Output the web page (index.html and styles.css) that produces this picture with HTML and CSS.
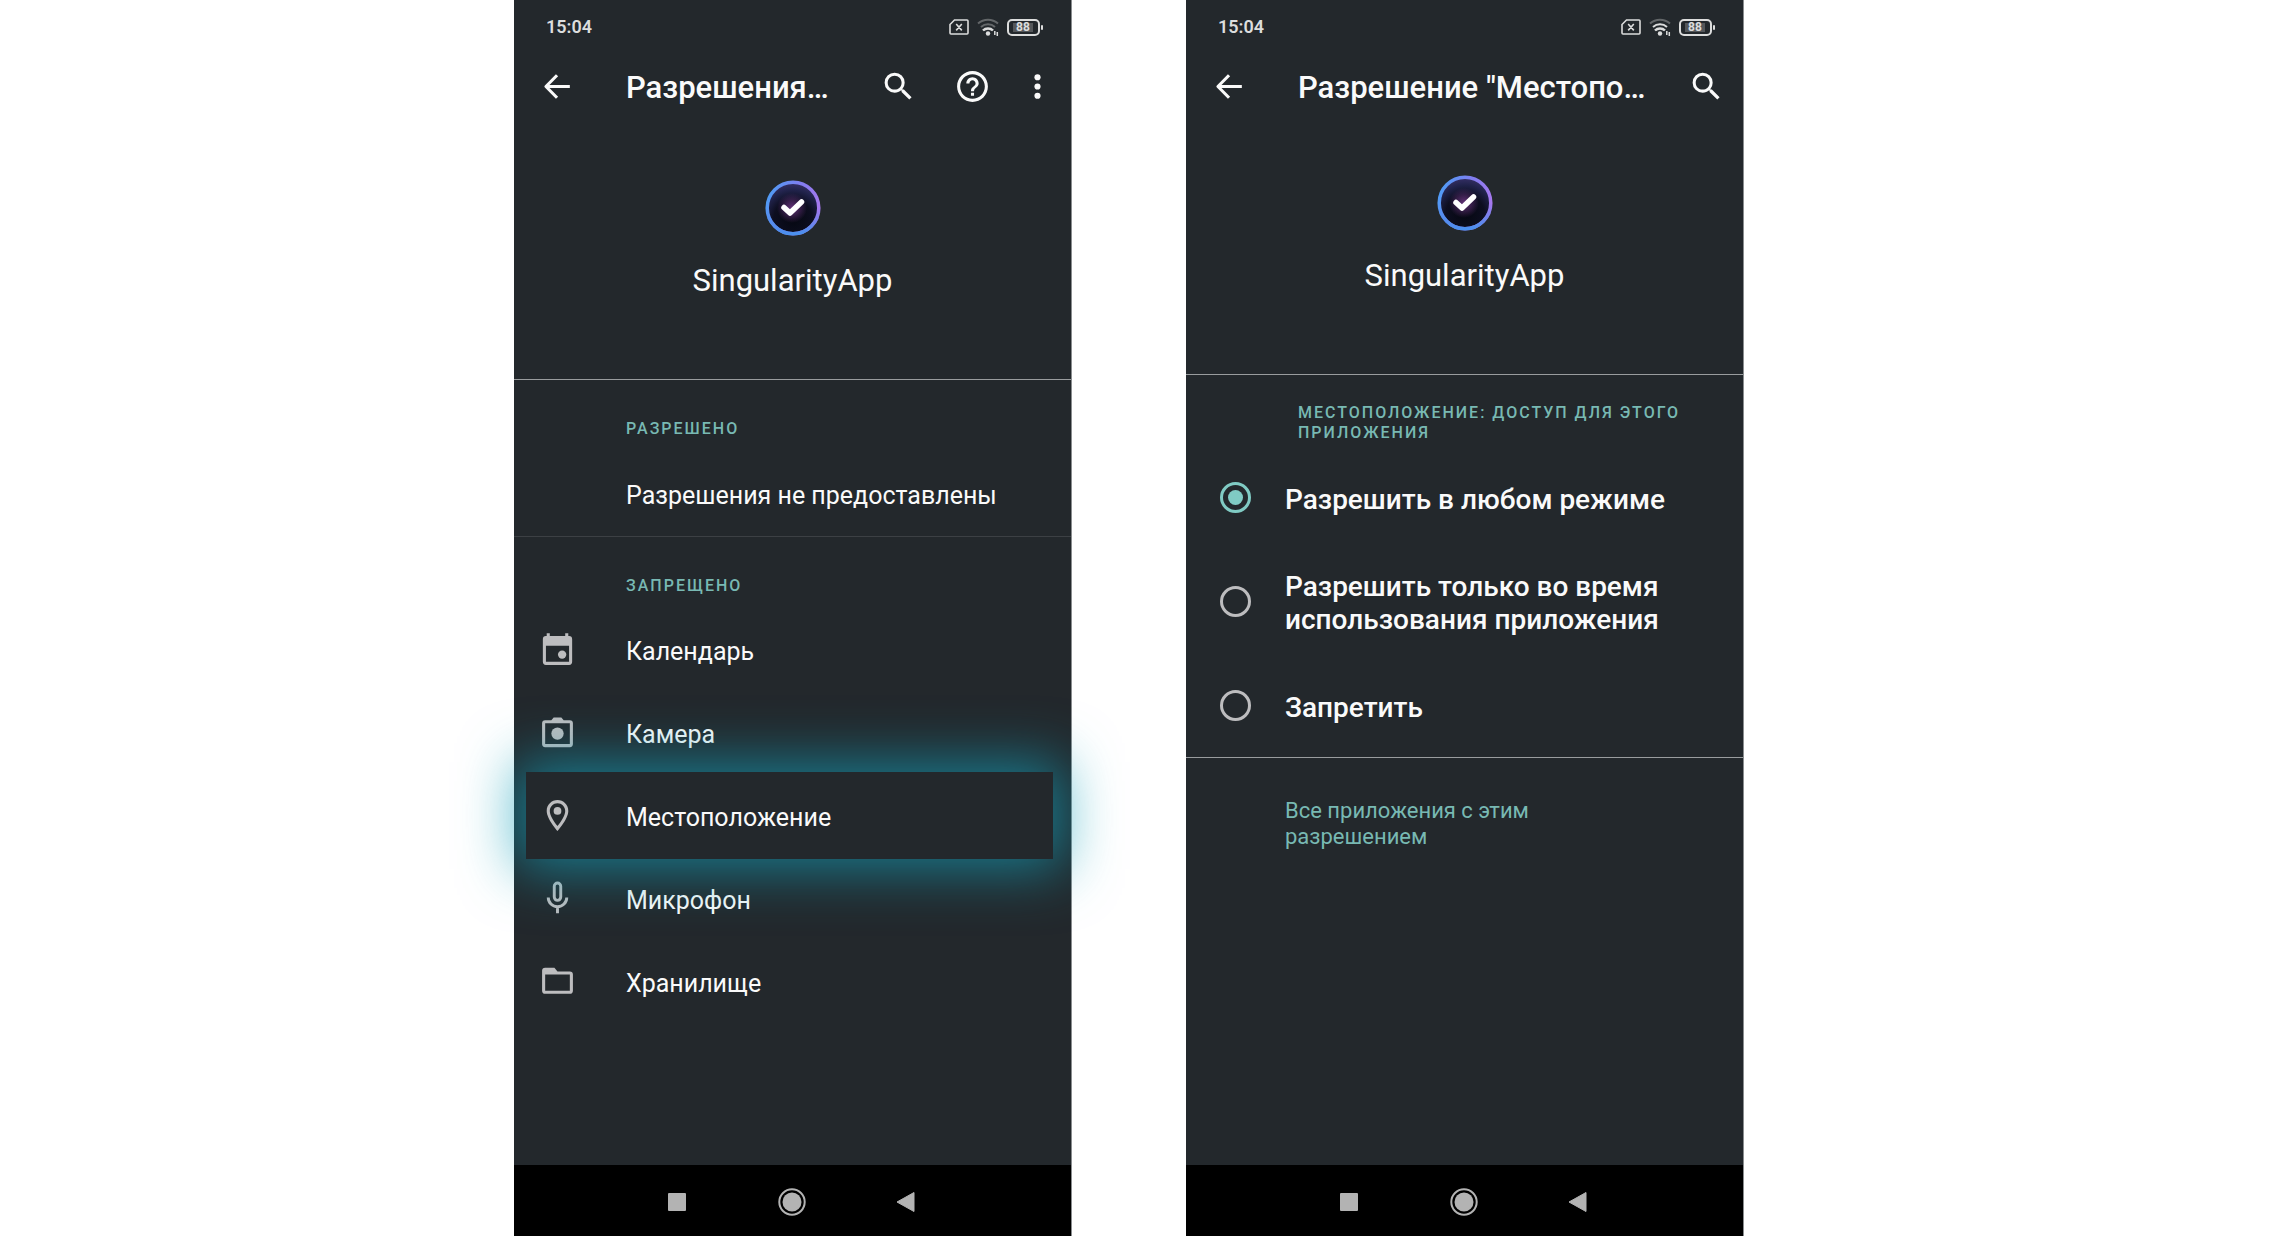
FILE: index.html
```html
<!DOCTYPE html>
<html lang="ru">
<head>
<meta charset="utf-8">
<meta name="viewport" content="width=device-width, initial-scale=1">
<title>SingularityApp — разрешения</title>
<link rel="stylesheet" href="styles.css">
</head>
<body>
<svg class="defs" aria-hidden="true">
  <defs>
    <linearGradient id="ring" x1="0" y1="0.3" x2="1" y2="0.6">
      <stop offset="0" stop-color="#4f9bf5"/><stop offset="0.5" stop-color="#7f7df0"/><stop offset="1" stop-color="#a878ee"/>
    </linearGradient>
    <linearGradient id="ringLow" x1="0" y1="0" x2="0" y2="1">
      <stop offset="0.5" stop-color="#4a86e8" stop-opacity="0"/><stop offset="1" stop-color="#4a90ee"/>
    </linearGradient>
    <radialGradient id="core" cx="0.5" cy="0.72" r="0.75">
      <stop offset="0" stop-color="#060812"/><stop offset="0.5" stop-color="#0d0e20"/><stop offset="0.75" stop-color="#20224a"/><stop offset="1" stop-color="#3d3470"/>
    </radialGradient>
    <radialGradient id="halo">
      <stop offset="0" stop-color="#7a3a90" stop-opacity="0.8"/><stop offset="1" stop-color="#7a3a90" stop-opacity="0"/>
    </radialGradient>
    <symbol id="i-back" viewBox="0 0 24 24"><path d="M20 12H4.800M11.700 4.700L4.500 12l7.200 7.300" fill="none" stroke="currentColor" stroke-width="2" stroke-linejoin="round"/></symbol>
    <symbol id="i-search" viewBox="0 0 24 24"><path fill="currentColor" d="M15.500 14h-.79l-.28-.27A6.470 6.470 0 0 0 16 9.500 6.500 6.500 0 1 0 9.500 16c1.610 0 3.090-.59 4.230-1.570l.27.28v.79l5 4.990L20.490 19l-4.990-5zm-6 0C7.010 14 5 11.990 5 9.500S7.010 5 9.500 5 14 7.010 14 9.500 11.990 14 9.500 14z"/></symbol>
    <symbol id="i-help" viewBox="0 0 24 24"><path fill="currentColor" d="M11 18h2v-2h-2v2zm1-16C6.480 2 2 6.480 2 12s4.480 10 10 10 10-4.480 10-10S17.520 2 12 2zm0 18c-4.410 0-8-3.590-8-8s3.590-8 8-8 8 3.590 8 8-3.590 8-8 8zm0-14c-2.210 0-4 1.790-4 4h2c0-1.100.9-2 2-2s2 .9 2 2c0 2-3 1.750-3 5h2c0-2.250 3-2.500 3-5 0-2.210-1.790-4-4-4z"/></symbol>
    <symbol id="i-more" viewBox="0 0 24 24"><g fill="currentColor"><circle cx="12" cy="6" r="2"/><circle cx="12" cy="12" r="2"/><circle cx="12" cy="18" r="2"/></g></symbol>
    <symbol id="i-calendar" viewBox="0 0 24 24"><path fill="currentColor" fill-rule="evenodd" d="M7 1.500v1.800h10V1.500h2v1.800h.5a2 2 0 0 1 2 2V20a2 2 0 0 1-2 2h-15a2 2 0 0 1-2-2V5.300a2 2 0 0 1 2-2H5V1.500zM4.500 9.500V20h15V9.500z"/><circle cx="15" cy="15.300" r="2.700" fill="currentColor"/></symbol>
    <symbol id="i-camera" viewBox="0 0 24 24"><path fill="currentColor" fill-rule="evenodd" d="M8 4l1.500-1.800h5L16 4h4a2 2 0 0 1 2 2v13.500a2 2 0 0 1-2 2H4a2 2 0 0 1-2-2V6a2 2 0 0 1 2-2zM4 6v13.500h16V6z"/><circle cx="12" cy="12.700" r="4" fill="currentColor"/></symbol>
    <symbol id="i-pin" viewBox="0 0 24 24"><path fill="currentColor" d="M12 2C8.130 2 5 5.130 5 9c0 5.250 7 13 7 13s7-7.750 7-13c0-3.870-3.130-7-7-7zM7 9c0-2.760 2.240-5 5-5s5 2.240 5 5c0 2.880-2.880 7.190-5 9.880C9.920 16.210 7 11.850 7 9z"/><circle cx="12" cy="9" r="2.500" fill="currentColor"/></symbol>
    <symbol id="i-mic" viewBox="0 0 24 24"><path d="M12 2a2.100 2.100 0 0 1 2.100 2.100v7a2.100 2.100 0 0 1-4.200 0v-7A2.100 2.100 0 0 1 12 2zM6 11.300a6 6 0 0 0 12 0M12 17.300V21.500" fill="none" stroke="currentColor" stroke-width="1.900"/></symbol>
    <symbol id="i-folder" viewBox="0 0 24 24"><path fill="currentColor" fill-rule="evenodd" d="M4 3h6l2 2.500h8a2 2 0 0 1 2 2V18a2 2 0 0 1-2 2H4a2 2 0 0 1-2-2V5a2 2 0 0 1 2-2zm0 4.500V18h16V7.500z"/></symbol>
    <symbol id="i-sim" viewBox="0 0 20 16"><path d="M5.500 1H18a1 1 0 0 1 1 1v12a1 1 0 0 1-1 1H2a1 1 0 0 1-1-1V5.500zM7.200 5l5.600 6.400M12.800 5l-5.600 6.400" fill="none" stroke="currentColor" stroke-width="1.600"/></symbol>
    <symbol id="i-battery" viewBox="0 0 36 17"><rect x="1" y="1" width="31" height="15" rx="4" fill="none" stroke="currentColor" stroke-width="2"/><rect x="6" y="4" width="20" height="9" fill="#54575a"/><rect x="34" y="6" width="2" height="5" rx="1" fill="currentColor"/></symbol>
    <symbol id="i-app" viewBox="0 0 56 56"><circle cx="28" cy="28" r="26" fill="url(#core)"/><circle cx="27" cy="28" r="15" fill="url(#halo)"/><circle cx="28" cy="28" r="25.800" fill="none" stroke="url(#ring)" stroke-width="3.500"/><circle cx="28" cy="28" r="25.800" fill="none" stroke="url(#ringLow)" stroke-width="3.500"/><path d="M19 27.500l6 5.500 11.500-11" fill="none" stroke="#fff" stroke-width="5.500" stroke-linecap="round" stroke-linejoin="round"/></symbol>
  </defs>
</svg>

<main class="stage">
  <section class="phone phone-first" aria-label="Разрешения приложения">
    <div class="status">
      <time class="clock">15:04</time>
      <svg class="sim"><use href="#i-sim"/></svg>
      <svg class="wifi" viewBox="0 0 22 18"><g fill="none" stroke="currentColor" stroke-width="2"><path class="dim" d="M1 5.500a15 15 0 0 1 20 0"/><path class="dim" d="M4 9a10.500 10.500 0 0 1 14 0"/><path d="M6 12.500a7 7 0 0 1 10 0" stroke-width="2.500"/></g><circle cx="11" cy="15.500" r="2.200" fill="currentColor"/><path d="M17.800 13V17M20.300 14v4" stroke="currentColor" stroke-width="1.500"/></svg>
      <span class="battery"><svg><use href="#i-battery"/></svg><b>88</b></span>
    </div>
    <header class="toolbar">
      <button class="icon-btn" aria-label="Назад"><svg class="icon"><use href="#i-back"/></svg></button>
      <h1 class="title">Разрешения…</h1>
      <div class="actions">
        <button class="icon-btn" aria-label="Поиск"><svg class="icon"><use href="#i-search"/></svg></button>
        <button class="icon-btn" aria-label="Справка"><svg class="icon"><use href="#i-help"/></svg></button>
        <button class="icon-btn more" aria-label="Ещё"><svg class="icon"><use href="#i-more"/></svg></button>
      </div>
    </header>
    <div class="hero">
      <svg class="app-icon"><use href="#i-app"/></svg>
      <p class="app-name">SingularityApp</p>
    </div>
    <section class="group group-granted">
      <h2 class="group-title">РАЗРЕШЕНО</h2>
      <p class="empty">Разрешения не предоставлены</p>
    </section>
    <section class="group">
      <h2 class="group-title">ЗАПРЕЩЕНО</h2>
      <ul class="rows">
        <li><a class="row" href="#calendar"><svg class="icon"><use href="#i-calendar"/></svg><span>Календарь</span></a></li>
        <li><a class="row" href="#camera"><svg class="icon"><use href="#i-camera"/></svg><span>Камера</span></a></li>
        <li><a class="row row-active" href="#location"><svg class="icon"><use href="#i-pin"/></svg><span>Местоположение</span></a></li>
        <li><a class="row" href="#microphone"><svg class="icon"><use href="#i-mic"/></svg><span>Микрофон</span></a></li>
        <li><a class="row" href="#storage"><svg class="icon"><use href="#i-folder"/></svg><span>Хранилище</span></a></li>
      </ul>
    </section>
    <nav class="navbar" aria-label="Системная навигация">
      <button class="icon-btn" aria-label="Недавние"><svg class="nav-icon" viewBox="0 0 28 28"><rect x="5" y="5" width="18" height="18" rx="1" fill="currentColor"/></svg></button>
      <button class="icon-btn" aria-label="Домой"><svg class="nav-icon" viewBox="0 0 28 28"><circle cx="14" cy="14" r="12.700" fill="none" stroke="currentColor" stroke-width="2"/><circle cx="14" cy="14" r="9.500" fill="currentColor"/></svg></button>
      <button class="icon-btn" aria-label="Назад"><svg class="nav-icon" viewBox="0 0 28 28"><path d="M4 14L21 4.500v19z" fill="currentColor" stroke="currentColor" stroke-linejoin="round"/></svg></button>
    </nav>
  </section>

  <section class="phone phone-second" aria-label="Разрешение «Местоположение»">
    <div class="status">
      <time class="clock">15:04</time>
      <svg class="sim"><use href="#i-sim"/></svg>
      <svg class="wifi" viewBox="0 0 22 18"><g fill="none" stroke="currentColor" stroke-width="2"><path class="dim" d="M1 5.500a15 15 0 0 1 20 0"/><path d="M4 9a10.500 10.500 0 0 1 14 0"/><path d="M6 12.500a7 7 0 0 1 10 0" stroke-width="2.500"/></g><circle cx="11" cy="15.500" r="2.200" fill="currentColor"/><path d="M17.800 13V17M20.300 14v4" stroke="currentColor" stroke-width="1.500"/></svg>
      <span class="battery"><svg><use href="#i-battery"/></svg><b>88</b></span>
    </div>
    <header class="toolbar">
      <button class="icon-btn" aria-label="Назад"><svg class="icon"><use href="#i-back"/></svg></button>
      <h1 class="title">Разрешение "Местопо…</h1>
      <div class="actions">
        <button class="icon-btn" aria-label="Поиск"><svg class="icon"><use href="#i-search"/></svg></button>
      </div>
    </header>
    <div class="hero">
      <svg class="app-icon"><use href="#i-app"/></svg>
      <p class="app-name">SingularityApp</p>
    </div>
    <fieldset class="choices">
      <legend class="group-title">МЕСТОПОЛОЖЕНИЕ: ДОСТУП ДЛЯ ЭТОГО ПРИЛОЖЕНИЯ</legend>
      <label class="choice"><input type="radio" name="access" checked><span>Разрешить в любом режиме</span></label>
      <label class="choice"><input type="radio" name="access"><span>Разрешить только во время использования приложения</span></label>
      <label class="choice"><input type="radio" name="access"><span>Запретить</span></label>
    </fieldset>
    <a class="all-apps" href="#all-apps">Все приложения с этим разрешением</a>
    <nav class="navbar" aria-label="Системная навигация">
      <button class="icon-btn" aria-label="Недавние"><svg class="nav-icon" viewBox="0 0 28 28"><rect x="5" y="5" width="18" height="18" rx="1" fill="currentColor"/></svg></button>
      <button class="icon-btn" aria-label="Домой"><svg class="nav-icon" viewBox="0 0 28 28"><circle cx="14" cy="14" r="12.700" fill="none" stroke="currentColor" stroke-width="2"/><circle cx="14" cy="14" r="9.500" fill="currentColor"/></svg></button>
      <button class="icon-btn" aria-label="Назад"><svg class="nav-icon" viewBox="0 0 28 28"><path d="M4 14L21 4.500v19z" fill="currentColor" stroke="currentColor" stroke-linejoin="round"/></svg></button>
    </nav>
  </section>
</main>
</body>
</html>
```
FILE: styles.css
```css
:root {
  --surface: #23282c;
  --text: #fafafa;
  --muted: #bdbdbf;
  --accent: #80cbc4;
  --label: #78b9b3;
  --rule: #999c9e;
  --gutter: 25px;
  --indent: 112px;
}

* { box-sizing: border-box; }

body {
  margin: 0;
  background: #fff;
  color: var(--text);
  font-family: Roboto, "Noto Sans", sans-serif;
  font-size: 25px;
  line-height: 30px;
}

h1, h2, p, ul { margin: 0; padding: 0; font-weight: 400; }
ul { list-style: none; }
a { color: inherit; text-decoration: none; }

.defs { position: absolute; width: 0; height: 0; }

.stage {
  display: grid;
  grid-template-columns: 514fr 558fr 114fr 558fr 528fr;
  min-height: 100vh;
}

.phone {
  display: flex;
  flex-direction: column;
  min-width: 0;
  background: var(--surface);
  border-right: 1px solid #8a8d8f;
}
.phone-first { grid-column: 2; }
.phone-second { grid-column: 4; }

.status {
  display: flex;
  align-items: center;
  gap: 8px;
  height: 54px;
  padding: 0 28px 0 32px;
  color: #dcdddd;
}
.clock {
  margin-right: auto;
  font-size: 18px;
  font-weight: 600;
}
.sim { width: 20px; height: 16px; }
.wifi { width: 22px; height: 18px; }
.wifi .dim { opacity: 0.35; }
.battery { display: grid; width: 36px; }
.battery > * { grid-area: 1 / 1; }
.battery svg { width: 36px; height: 17px; }
.battery b {
  padding-right: 4px;
  font-size: 12px;
  line-height: 17px;
  text-align: center;
}

.icon-btn {
  display: flex;
  padding: 0;
  border: 0;
  background: none;
  color: inherit;
}
.icon { flex: none; width: 37px; height: 37px; }

.toolbar {
  display: flex;
  align-items: center;
  height: 64px;
  padding: 0 15px 0 var(--gutter);
}
.title {
  flex: 1;
  margin-left: 50px;
  padding-top: 4px;
  overflow: hidden;
  font-size: 31px;
  font-weight: 500;
  line-height: 40px;
  white-space: nowrap;
}
.actions { display: flex; gap: 37px; }
.more { margin-left: -9px; }
.phone-second .toolbar { padding-right: 18px; }

.hero {
  display: flex;
  flex-direction: column;
  align-items: center;
  gap: 25px;
  height: 262px;
  padding-top: 62px;
  border-bottom: 1px solid var(--rule);
}
.phone-second .hero { height: 257px; padding-top: 57px; }
.app-icon { width: 56px; height: 56px; }
.app-name { font-size: 31px; line-height: 40px; }

.group { padding-top: 39px; }
.group-granted {
  height: 157px;
  border-bottom: 1px solid #3c4044;
}
.group-title {
  padding: 0 24px 0 var(--indent);
  color: var(--label);
  font-size: 16px;
  font-weight: 500;
  line-height: 20px;
  letter-spacing: 2px;
}
.empty { margin-top: 42px; padding-left: var(--indent); }

.rows { margin-top: 12px; }
.row {
  display: flex;
  align-items: center;
  gap: 50px;
  height: 83px;
  padding-left: var(--gutter);
}
.row .icon { color: var(--muted); }
.row span { padding-top: 4px; }
.row-active {
  position: relative;
  height: 87px;
  margin: -2px 18px -2px 12px;
  padding-left: 13px;
  background: var(--surface);
  box-shadow: 0 0 56px 10px rgba(20, 160, 185, 0.7);
}

.choices {
  margin: 0;
  padding: 0;
  border: 0;
  border-bottom: 1px solid var(--rule);
}
.choices .group-title { padding-top: 28px; padding-bottom: 2px; }
.choice {
  display: flex;
  align-items: center;
  gap: 34px;
  min-height: 104px;
  padding: 0 60px 0 34px;
  font-size: 28px;
  font-weight: 500;
  line-height: 33px;
}
.choice span { padding-top: 4px; }
.choice input {
  flex: none;
  display: grid;
  place-items: center;
  width: 31px;
  height: 31px;
  margin: 0;
  appearance: none;
  border: 3px solid var(--muted);
  border-radius: 50%;
}
.choice input:checked { border-color: var(--accent); }
.choice input:checked::before {
  content: "";
  width: 15px;
  height: 15px;
  border-radius: 50%;
  background: var(--accent);
}

.all-apps {
  width: 400px;
  padding: 40px 0 0 99px;
  color: var(--label);
  font-size: 22px;
  line-height: 26px;
}

.navbar {
  display: flex;
  align-items: center;
  justify-content: center;
  gap: 87px;
  height: 71px;
  margin-top: auto;
  padding: 2px 2px 0 0;
  background: #000;
  color: #b3b3b3;
}
.nav-icon { width: 28px; height: 28px; }
```
